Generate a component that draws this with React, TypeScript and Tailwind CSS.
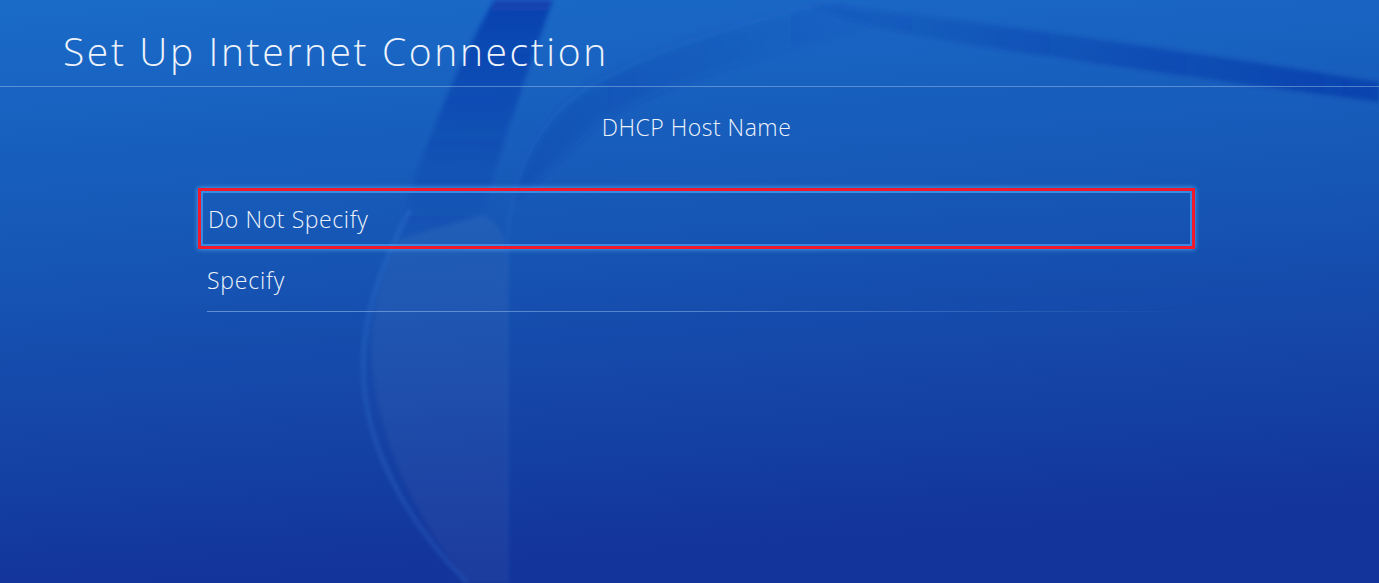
import React from "react";

function Waves() {
  return (
    <svg
      className="absolute inset-0 h-full w-full"
      viewBox="0 0 1379 583"
      preserveAspectRatio="none"
    >
      <defs>
        <linearGradient id="bg" x1="0" y1="0" x2="0.15" y2="1">
          <stop offset="0" stopColor="#1a6bc9" />
          <stop offset="0.45" stopColor="#1656b4" />
          <stop offset="1" stopColor="#13349a" />
        </linearGradient>
        <linearGradient id="dark" x1="0" y1="0" x2="0" y2="1">
          <stop offset="0" stopColor="#0a32a6" stopOpacity="0.7" />
          <stop offset="0.6" stopColor="#0a32a6" stopOpacity="0.3" />
          <stop offset="1" stopColor="#0a32a6" stopOpacity="0" />
        </linearGradient>
        <linearGradient id="swoosh" x1="0" y1="0" x2="1" y2="0">
          <stop offset="0" stopColor="#0a32a6" stopOpacity="0.1" />
          <stop offset="0.5" stopColor="#0a32a6" stopOpacity="0.35" />
          <stop offset="1" stopColor="#0a32a6" stopOpacity="0.6" />
        </linearGradient>
        <linearGradient id="shade" x1="0" y1="0" x2="1" y2="0">
          <stop offset="0" stopColor="#0a32a6" stopOpacity="0.25" />
          <stop offset="1" stopColor="#0a32a6" stopOpacity="0" />
        </linearGradient>
        <filter id="blur2" x="-10%" y="-10%" width="120%" height="120%">
          <feGaussianBlur stdDeviation="2" />
        </filter>
        <filter id="blur5" x="-10%" y="-20%" width="120%" height="140%">
          <feGaussianBlur stdDeviation="4" />
        </filter>
      </defs>
      <rect width="1379" height="583" fill="url(#bg)" />
      {/* shade above curve B */}
      <path
        d="M 837 0 C 700 30 600 70 560 110 C 535 140 520 170 515 200 L 600 120 C 700 70 800 40 900 30 C 870 15 850 5 837 0 Z"
        fill="url(#shade)"
        filter="url(#blur5)"
      />
      {/* dark fold at top */}
      <path
        d="M 494 0 L 553 0 C 532 60 506 130 482 215 L 398 240 C 418 160 452 75 494 0 Z"
        fill="url(#dark)"
        filter="url(#blur2)"
      />
      {/* top-right swoosh */}
      <path
        d="M 806 3 C 950 18 1150 45 1379 82 L 1379 102 C 1150 72 980 48 880 28 C 840 18 820 10 806 3 Z"
        fill="url(#swoosh)"
        filter="url(#blur2)"
      />
      {/* lighter crescent lower */}
      <path
        d="M 398 240 C 350 330 365 450 467 583 L 506 583 L 507 260 C 506 232 495 220 482 215 Z"
        fill="#ffffff"
        fillOpacity="0.045"
        filter="url(#blur2)"
      />
      {/* highlight edge of crescent */}
      <path
        d="M 410 210 C 372 280 350 350 372 430 C 390 490 425 540 467 583"
        fill="none"
        stroke="#4a90e8"
        strokeOpacity="0.3"
        strokeWidth="3"
        filter="url(#blur2)"
      />
      <path
        d="M 837 0 C 700 30 600 70 560 110 C 520 150 507 200 507 260 L 507 583"
        fill="none"
        stroke="#3d86e0"
        strokeOpacity="0.15"
        strokeWidth="3"
        filter="url(#blur2)"
      />
    </svg>
  );
}

export default function App() {
  return (
    <div
      className="relative h-[583px] w-full overflow-hidden text-[#eef3fb]"
      style={{ fontFamily: '"Open Sans", "Noto Sans", sans-serif' }}
    >
      <Waves />
      <div className="relative flex flex-col">
        <div className="flex h-[87px] items-end border-b border-[rgba(170,200,240,0.45)] pb-[9px] pl-[63px]">
          <h1 className="text-[39px] font-light leading-[52px] tracking-[2.6px]">
            Set Up Internet Connection
          </h1>
        </div>
        <div className="ml-[198px] flex w-[997px] flex-col">
          <div className="mt-[24px] text-center text-[23px] font-light leading-[32px] tracking-[0.5px]">
            DHCP Host Name
          </div>
          <div className="mt-[45px] flex flex-col">
            <div className="flex h-[61px] items-center border-[3px] border-[#f01a2c] pl-[7px] shadow-[0_0_5px_rgba(90,180,255,0.9),inset_0_0_0_2px_rgba(70,160,245,0.7)]">
              <span className="text-[23px] font-light leading-[30px] tracking-[0.6px]">
                Do Not Specify
              </span>
            </div>
            <div className="flex h-[62px] items-center pl-[9px]">
              <span className="text-[23px] font-light leading-[30px] tracking-[0.8px]">
                Specify
              </span>
            </div>
            <div className="ml-[9px] h-px w-[985px] bg-gradient-to-r from-[rgba(160,195,240,0.55)] via-[rgba(160,195,240,0.45)] to-[rgba(160,195,240,0)]" />
          </div>
        </div>
      </div>
    </div>
  );
}
